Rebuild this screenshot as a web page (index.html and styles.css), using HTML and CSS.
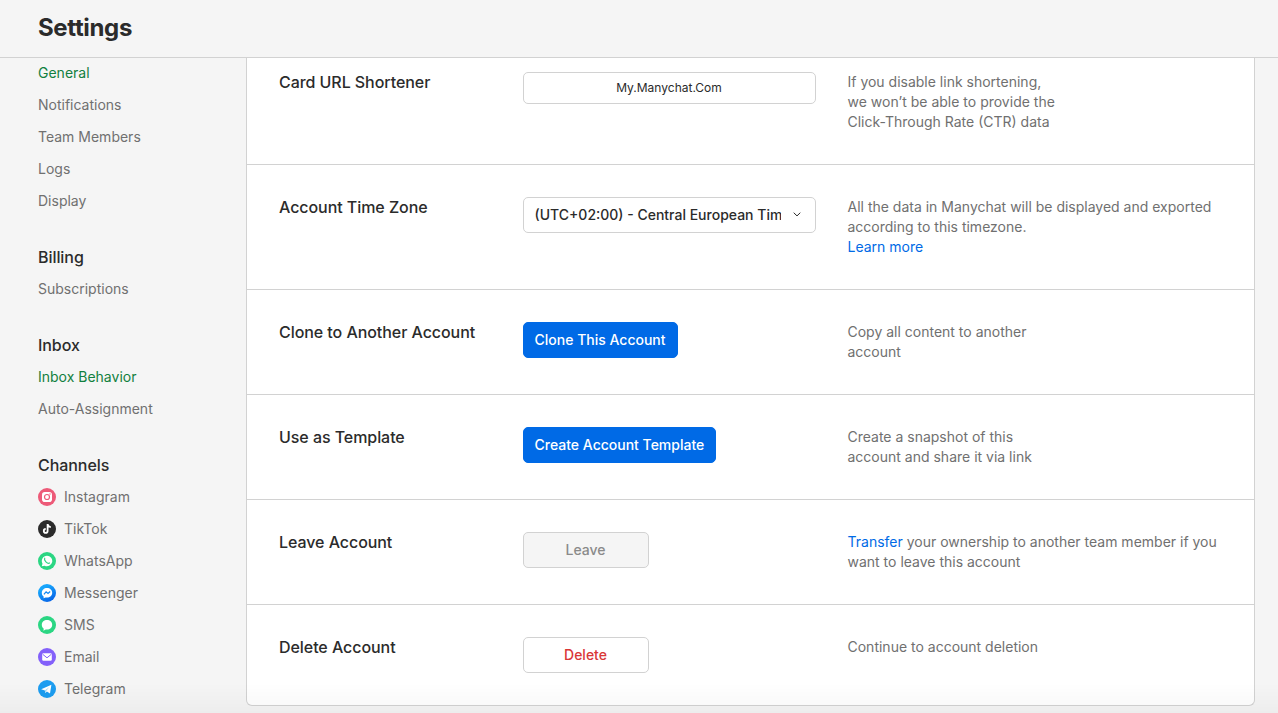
FILE: index.html
```html
<!DOCTYPE html>
<html lang="en">
<head>
  <meta charset="UTF-8" />
  <meta name="viewport" content="width=device-width, initial-scale=1.0" />
  <title>Settings</title>
  <link rel="stylesheet" href="styles.css">
</head>
<body>
  <header class="header">
    <h1>Settings</h1>
  </header>

  <div class="layout">
    <nav class="sidebar">
      <div class="group">
        <a class="item active">General</a>
        <a class="item">Notifications</a>
        <a class="item">Team Members</a>
        <a class="item">Logs</a>
        <a class="item">Display</a>
      </div>
      <div class="group">
        <h2>Billing</h2>
        <a class="item">Subscriptions</a>
      </div>
      <div class="group">
        <h2>Inbox</h2>
        <a class="item active">Inbox Behavior</a>
        <a class="item">Auto-Assignment</a>
      </div>
      <div class="group">
        <h2>Channels</h2>
        <a class="item">
          <svg class="icon" viewBox="0 0 18 18">
            <circle cx="9" cy="9" r="9" fill="#ed5a78"/>
            <rect x="4" y="4" width="10" height="10" rx="2.8" fill="#fff"/>
            <circle cx="9" cy="9" r="2.5" fill="none" stroke="#ed5a78" stroke-width="1.2"/>
            <circle cx="12" cy="6" r=".7" fill="#ed5a78"/>
          </svg>
          Instagram
        </a>
        <a class="item">
          <svg class="icon" viewBox="0 0 18 18">
            <circle cx="9" cy="9" r="9" fill="#2b2b2b"/>
            <path d="M9.6 4v6.9a1.9 1.9 0 1 1-1.9-1.9M9.6 4.2c.2 1.7 1.3 2.7 3.2 2.9" fill="none" stroke="#fff" stroke-width="1.8"/>
          </svg>
          TikTok
        </a>
        <a class="item">
          <svg class="icon" viewBox="0 0 18 18">
            <circle cx="9" cy="9" r="9" fill="#2bd683"/>
            <path d="M9 3.7a5.3 5.3 0 1 1-2.500 10L3.800 14.300l.7-2.600A5.300 5.300 0 0 1 9 3.700z" fill="#fff"/>
            <path d="M6.700 6.200c-.5 1 0 2.400 1.200 3.600s2.700 1.900 3.600 1.200" fill="none" stroke="#2bd683" stroke-width="1.200" stroke-linecap="round"/>
          </svg>
          WhatsApp
        </a>
        <a class="item">
          <svg class="icon" viewBox="0 0 18 18">
            <defs>
              <linearGradient id="messenger" x1="0" y1="0" x2=".6" y2="1">
                <stop offset=".3" stop-color="#17a5fb"/>
                <stop offset="1" stop-color="#0866e8"/>
              </linearGradient>
            </defs>
            <circle cx="9" cy="9" r="9" fill="url(#messenger)"/>
            <path d="M9 4c3 0 5.200 2.100 5.200 4.800S12 13.600 9 13.600l-1.500-.2-1.900.9v-1.700C4.400 11.700 3.800 10.400 3.800 8.800 3.800 6.100 6 4 9 4z" fill="#fff"/>
            <path d="M5.900 10.400l2.200-2.500 1.900 1.500 2.200-1.900" fill="none" stroke="#1489f3" stroke-width="1.200"/>
          </svg>
          Messenger
        </a>
        <a class="item">
          <svg class="icon" viewBox="0 0 18 18">
            <circle cx="9" cy="9" r="9" fill="#2bd683"/>
            <path d="M9 4.100c3 0 5.200 2 5.200 4.700S12 13.600 9 13.600l-1.300-.1c-.8.600-1.700.900-2.700.900.5-.5.800-1.100.8-1.700C4.500 11.800 3.800 10.500 3.800 8.800 3.800 6.100 6 4.100 9 4.100z" fill="#fff"/>
          </svg>
          SMS
        </a>
        <a class="item">
          <svg class="icon" viewBox="0 0 18 18">
            <circle cx="9" cy="9" r="9" fill="#8360fa"/>
            <rect x="4.200" y="5.200" width="9.600" height="7.600" rx="1.200" fill="#fff"/>
            <path d="M4.600 6.200L9 9.800l4.400-3.600" fill="none" stroke="#8360fa" stroke-width="1"/>
          </svg>
          Email
        </a>
        <a class="item">
          <svg class="icon" viewBox="0 0 18 18">
            <circle cx="9" cy="9" r="9" fill="#1d9df0"/>
            <path d="M3.200 9.200L13.400 4.800 12 13.500 8.900 11.500 7.300 13 6.900 10.500z" fill="#fff"/>
            <path d="M6.900 10.500l4.500-3.600-3.300 4.100-.8 2z" fill="#9fd6f8"/>
          </svg>
          Telegram
        </a>
      </div>
    </nav>

    <main class="card">
      <section class="row">
        <h3>Card URL Shortener</h3>
        <div class="control">
          <div class="input">My.Manychat.Com</div>
        </div>
        <p>If you disable link shortening,<br>we won’t be able to provide the<br>Click-Through Rate (CTR) data</p>
      </section>
      <section class="row">
        <h3>Account Time Zone</h3>
        <div class="control">
          <div class="select">
            <span>(UTC+02:00) - Central European Time</span>
            <svg class="chevron" viewBox="0 0 8 5"><path d="M.7.7L4 3.900 7.300.7"/></svg>
          </div>
        </div>
        <p>All the data in Manychat will be displayed and exported<br>according to this timezone.<br><a class="link">Learn more</a></p>
      </section>
      <section class="row">
        <h3>Clone to Another Account</h3>
        <div class="control">
          <button class="btn primary">Clone This Account</button>
        </div>
        <p>Copy all content to another<br>account</p>
      </section>
      <section class="row">
        <h3>Use as Template</h3>
        <div class="control">
          <button class="btn primary">Create Account Template</button>
        </div>
        <p>Create a snapshot of this<br>account and share it via link</p>
      </section>
      <section class="row">
        <h3>Leave Account</h3>
        <div class="control">
          <button class="btn" disabled>Leave</button>
        </div>
        <p><a class="link">Transfer</a> your ownership to another team member if you<br>want to leave this account</p>
      </section>
      <section class="row">
        <h3>Delete Account</h3>
        <div class="control">
          <button class="btn danger">Delete</button>
        </div>
        <p>Continue to account deletion</p>
      </section>
    </main>
  </div>
  <div class="fade"></div>
</body>
</html>
```
FILE: styles.css
```css
* {
  box-sizing: border-box;
}
body {
  margin: 0;
  height: 100vh;
  overflow: hidden;
  font-family: Inter, sans-serif;
  font-size: 14px;
  color: #2b2b2b;
  background: #f5f5f5;
}
h1, h2, h3, p {
  margin: 0;
}
.header {
  height: 58px;
  padding: 0 38px;
  border-bottom: 1px solid #d2d2d2;
}
h1 {
  font-size: 24px;
  font-weight: 700;
  line-height: 56px;
  letter-spacing: -0.35px;
}
.layout {
  display: flex;
}
.sidebar {
  width: 246px;
  flex-shrink: 0;
  margin-top: -1px;
  padding-left: 38px;
}
.group {
  margin-bottom: 24px;
}
h2 {
  font-size: 16px;
  font-weight: 500;
  line-height: 32px;
  letter-spacing: -0.06px;
}
.item {
  display: flex;
  align-items: center;
  height: 32px;
  padding-bottom: 1px;
  color: #707070;
}
.item.active {
  color: #128040;
}
.icon {
  width: 18px;
  height: 18px;
  margin: 1px 8px 0 0;
}
.card {
  width: 1009px;
  height: 648px;
  background: #fff;
  border: 1px solid #d2d2d2;
  border-top: none;
  border-radius: 0 0 6px 6px;
}
.row {
  display: grid;
  grid-template-columns: 243.5px 293px 1fr;
  padding: 32px 0 32px 32px;
  border-bottom: 1px solid #d2d2d2;
}
.row:first-child {
  padding-top: 14px;
}
.row:last-child {
  border-bottom: none;
}
h3 {
  font-size: 16px;
  font-weight: 500;
  line-height: 20px;
  letter-spacing: -0.06px;
}
.row p {
  padding-left: 32px;
  line-height: 20px;
  color: #707070;
}
.link {
  color: #006ae6;
}
.control {
  height: 36px;
}
.input, .select {
  display: flex;
  align-items: center;
  border: 1px solid #d2d2d2;
  border-radius: 5px;
}
.input {
  justify-content: center;
  height: 32px;
  padding-bottom: 1px;
  font-size: 12px;
}
.select {
  height: 36px;
  padding: 0 14px 1px 11px;
  font-weight: 500;
}
.select span {
  width: 246px;
  overflow: hidden;
  white-space: nowrap;
}
.chevron {
  width: 8px;
  height: 5px;
  margin-left: auto;
  fill: none;
  stroke: #2b2b2b;
}
.btn {
  min-width: 126px;
  height: 36px;
  padding: 0 11px 1px;
  font: inherit;
  font-weight: 500;
  color: #2b2b2b;
  background: #fff;
  border: 1px solid #d2d2d2;
  border-radius: 5px;
}
.btn.primary {
  color: #fff;
  background: #006ae6;
  border-color: #006ae6;
}
.btn.danger {
  color: #d93636;
}
.btn:disabled {
  color: #8a8a8a;
  background: #f5f5f5;
}
.fade {
  position: fixed;
  left: 0;
  right: 0;
  bottom: 0;
  height: 30px;
  background: linear-gradient(rgba(0, 0, 0, 0), rgba(0, 0, 0, 0.03));
}
```
